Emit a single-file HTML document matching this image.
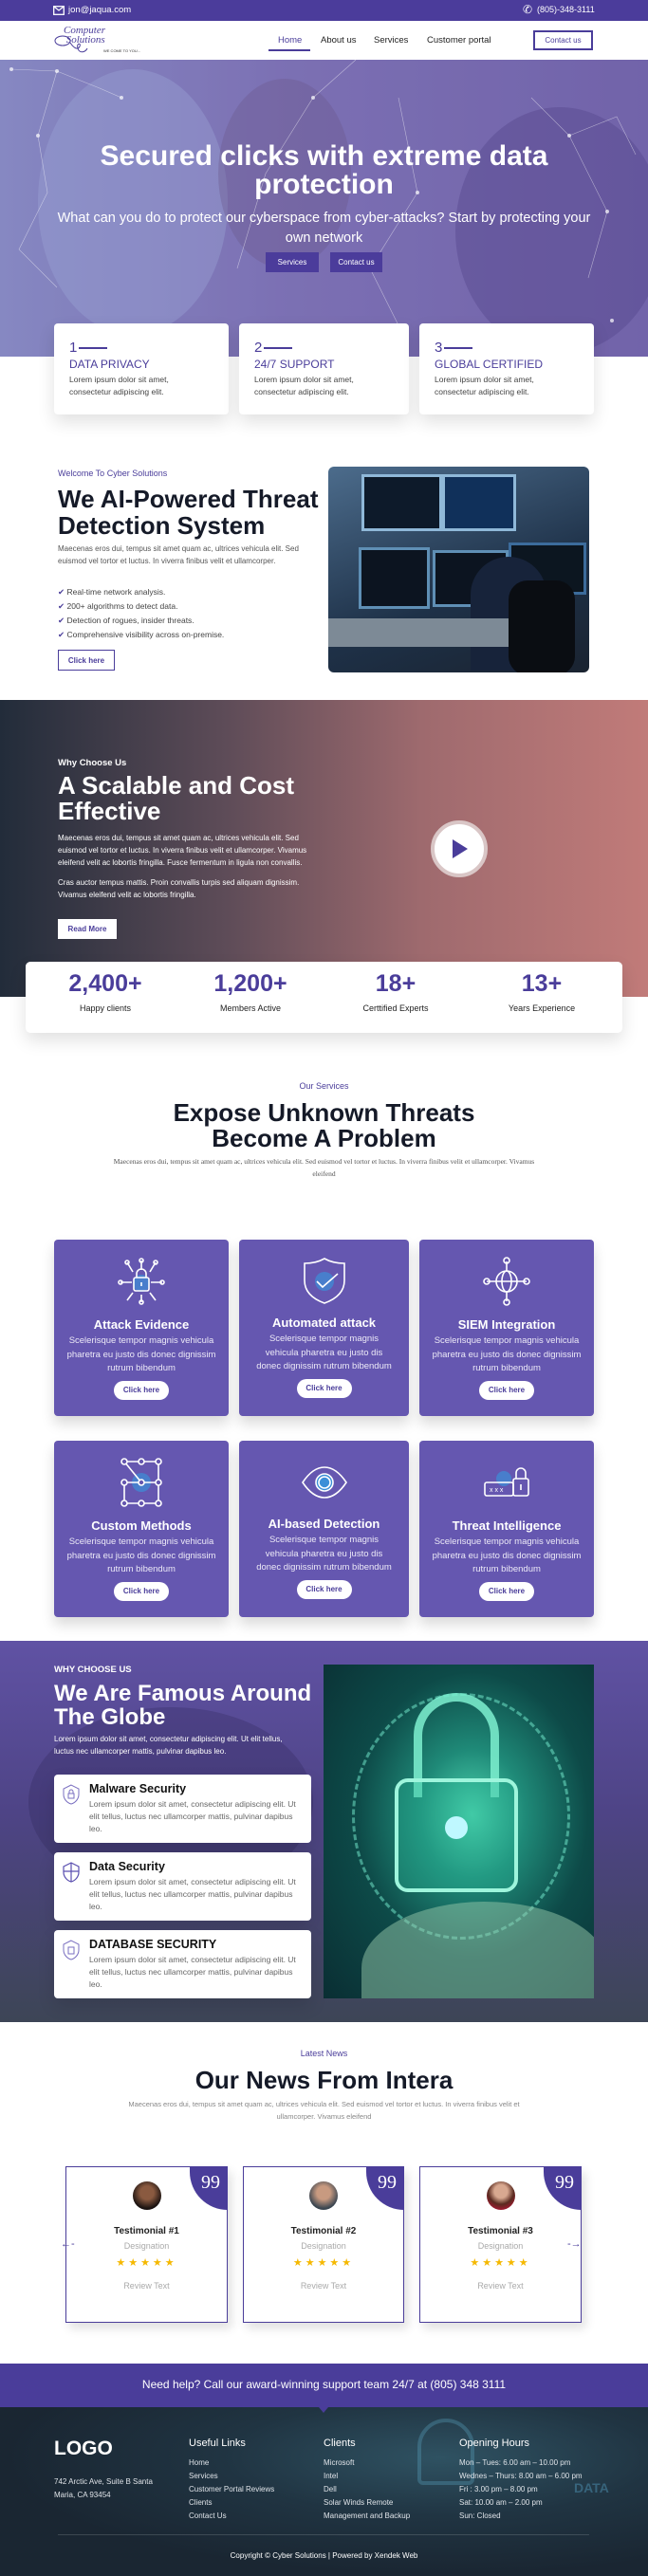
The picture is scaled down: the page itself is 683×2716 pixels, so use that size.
<!DOCTYPE html>
<html><head><meta charset="utf-8"><style>
*{margin:0;padding:0;box-sizing:border-box}
body{width:683px;height:2716px;position:relative;font-family:"Liberation Sans",sans-serif;background:#fff;overflow:hidden;color:#222}
.a{position:absolute}
.c{text-align:center}
.w{color:#fff}
.p{color:#4a3d9a}
.btnw{background:#fff;border:2px solid #4a3d9a;color:#4a3d9a;font-size:8px;font-weight:bold;display:flex;align-items:center;justify-content:center}
.card{background:#fff;border-radius:4px;box-shadow:0 8px 18px rgba(0,0,0,.12)}
.sv{background:#6557b0;border-radius:4px;box-shadow:0 8px 14px rgba(0,0,0,.15);color:#fff;text-align:center}
.sv h4{position:absolute;left:0;right:0;top:82px;font-size:13px}
.sv p{position:absolute;left:10px;right:10px;top:100px;font-size:9.5px;line-height:14.5px;color:#ece9f7}
.sv .b{position:absolute;left:50%;margin-left:-29px;top:149px;width:58px;height:20px;background:#fff;color:#4a3d9a;border-radius:10px;font-size:8px;font-weight:bold;line-height:20px}
.sv svg{position:absolute;left:50%;margin-left:-25px;top:18px}
.tc{border:1.5px solid #4a3d9a;background:#fff;box-shadow:4px 6px 10px rgba(0,0,0,.12);overflow:hidden}
.tc .q{position:absolute;right:-1px;top:-1px;width:40px;height:46px;background:#4a3d9a;border-bottom-left-radius:40px;color:#fff;font-size:20px;text-align:right;padding:6px 8px 0 0;font-family:"Liberation Serif",serif}
.tc .n{position:absolute;left:0;right:0;top:62px;font-size:10px;font-weight:bold;text-align:center}
.tc .d{position:absolute;left:0;right:0;top:78px;font-size:9px;color:#aaa;text-align:center}
.tc .s{position:absolute;left:0;right:0;top:94px;font-size:11px;color:#f5b800;text-align:center;letter-spacing:3px}
.tc .r{position:absolute;left:0;right:0;top:120px;font-size:9px;color:#aaa;text-align:center}
.tc .av{position:absolute;left:50%;margin-left:-15px;top:15px;width:30px;height:30px;border-radius:50%}
.ft{font-size:9px;color:#dfe3e8;line-height:14px}
.fh{font-size:11px;color:#fff}
.wc h5{position:absolute;left:37px;top:8px;font-size:12.5px;color:#111}
.wc p{position:absolute;left:37px;top:25px;right:10px;font-size:8.5px;line-height:13px;color:#666}
.wc svg{position:absolute;left:9px;top:10px}
</style></head><body>

<div class="a" style="left:0;top:0;width:683px;height:22px;background:#4b3c9b"></div>
<svg class="a" style="left:56px;top:6px" width="12" height="10" viewBox="0 0 12 10"><rect x=".7" y=".7" width="10.6" height="8.6" fill="none" stroke="#fff" stroke-width="1.3"/><path d="M1 1l5 4 5-4" fill="none" stroke="#fff" stroke-width="1.2"/></svg>
<div class="a w" style="left:72px;top:5px;font-size:9.5px">jon@jaqua.com</div>
<div class="a w" style="left:551px;top:3px;font-size:12px">&#9990;</div>
<div class="a w" style="left:566px;top:5px;font-size:9px">(805)-348-3111</div>

<div class="a" style="left:0;top:22px;width:683px;height:41px;background:#fff;box-shadow:0 1px 2px rgba(0,0,0,.1)"></div>
<div class="a" style="left:67px;top:27px;font-family:'Liberation Serif',serif;font-size:11px;color:#4a3d9a;line-height:10px;font-style:italic">Computer<br>&nbsp;Solutions</div>
<svg class="a" style="left:56px;top:33px" width="40" height="26" viewBox="0 0 40 26"><ellipse cx="10" cy="10" rx="8" ry="5" fill="none" stroke="#4a3d9a" stroke-width="1"/><path d="M18 12c4 6 8 8 10 4s-4-4-2 2 8 4 10 0" fill="none" stroke="#4a3d9a" stroke-width="1"/></svg>
<div class="a" style="left:109px;top:51px;font-size:4px;color:#333">WE COME TO YOU...</div>
<div class="a p" style="left:293px;top:37px;font-size:9.5px">Home</div>
<div class="a" style="left:283px;top:52px;width:44px;height:2px;background:#4a3d9a"></div>
<div class="a" style="left:338px;top:37px;font-size:9.5px;color:#222">About us</div>
<div class="a" style="left:394px;top:37px;font-size:9.5px;color:#222">Services</div>
<div class="a" style="left:450px;top:37px;font-size:9.5px;color:#222">Customer portal</div>
<div class="a btnw" style="left:562px;top:32px;width:63px;height:21px;font-weight:normal">Contact us</div>

<div class="a" style="left:0;top:63px;width:683px;height:313px;background:linear-gradient(90deg,#9096c8 0%,#8378b6 45%,#7668aa 100%);overflow:hidden">
 <div class="a" style="left:40px;top:10px;width:200px;height:280px;border-radius:50%;background:rgba(170,185,225,.4)"></div>
 <div class="a" style="left:230px;top:20px;width:140px;height:200px;border-radius:50%;background:rgba(110,90,130,.35)"></div>
 <div class="a" style="left:480px;top:50px;width:220px;height:260px;border-radius:50%;background:rgba(80,65,130,.4)"></div>
 <div class="a" style="left:0;top:0;width:683px;height:313px;background:rgba(95,80,170,.2)"></div>
 <svg class="a" style="left:0;top:0" width="683" height="313"><g stroke="rgba(255,255,255,.5)" stroke-width=".6" fill="none"><path d="M12 10L60 12 105 30 128 40M60 12L40 80 50 140 20 200 60 240M375 0L330 40 280 120 250 220M420 40L440 140 390 220 430 300M560 40L600 80 640 160 620 230M600 80L650 60 670 100"/></g><g fill="rgba(255,255,255,.7)"><circle cx="12" cy="10" r="2"/><circle cx="60" cy="12" r="2"/><circle cx="128" cy="40" r="2"/><circle cx="40" cy="80" r="2"/><circle cx="330" cy="40" r="2"/><circle cx="440" cy="140" r="2"/><circle cx="600" cy="80" r="2"/><circle cx="640" cy="160" r="2"/><circle cx="645" cy="275" r="2"/></g></svg>
</div>
<div class="a w c" style="left:0;top:150px;width:683px;font-size:30px;font-weight:bold;line-height:30px">Secured clicks with extreme data<br>protection</div>
<div class="a w c" style="left:60px;top:220px;width:563px;font-size:14.5px;line-height:21px">What can you do to protect our cyberspace from cyber-attacks? Start by protecting your own network</div>
<div class="a w c" style="left:280px;top:266px;width:56px;height:21px;background:#4b3c9b;font-size:8px;line-height:21px">Services</div>
<div class="a w c" style="left:348px;top:266px;width:55px;height:21px;background:#4b3c9b;font-size:8px;line-height:21px">Contact us</div>

<div class="a card" style="left:57px;top:341px;width:184px;height:96px"></div>
<div class="a card" style="left:252px;top:341px;width:179px;height:96px"></div>
<div class="a card" style="left:442px;top:341px;width:184px;height:96px"></div>
<div class="a p" style="left:73px;top:358px;font-size:15px">1<span style="display:inline-block;width:30px;height:1.5px;background:#4a3d9a;vertical-align:middle;margin-left:2px"></span></div>
<div class="a p" style="left:268px;top:358px;font-size:15px">2<span style="display:inline-block;width:30px;height:1.5px;background:#4a3d9a;vertical-align:middle;margin-left:2px"></span></div>
<div class="a p" style="left:458px;top:358px;font-size:15px">3<span style="display:inline-block;width:30px;height:1.5px;background:#4a3d9a;vertical-align:middle;margin-left:2px"></span></div>
<div class="a p" style="left:73px;top:377px;font-size:12px">DATA PRIVACY</div>
<div class="a p" style="left:268px;top:377px;font-size:12px">24/7 SUPPORT</div>
<div class="a p" style="left:458px;top:377px;font-size:12px">GLOBAL CERTIFIED</div>
<div class="a" style="left:73px;top:394px;font-size:8.5px;line-height:13px;color:#444">Lorem ipsum dolor sit amet,<br>consectetur adipiscing elit.</div>
<div class="a" style="left:268px;top:394px;font-size:8.5px;line-height:13px;color:#444">Lorem ipsum dolor sit amet,<br>consectetur adipiscing elit.</div>
<div class="a" style="left:458px;top:394px;font-size:8.5px;line-height:13px;color:#444">Lorem ipsum dolor sit amet,<br>consectetur adipiscing elit.</div>

<div class="a p" style="left:61px;top:494px;font-size:9px">Welcome To Cyber Solutions</div>
<div class="a" style="left:61px;top:512px;font-size:26px;font-weight:bold;line-height:28px;color:#151a28">We AI-Powered Threat<br>Detection System</div>
<div class="a" style="left:61px;top:572px;font-size:8px;line-height:13px;color:#555;width:270px">Maecenas eros dui, tempus sit amet quam ac, ultrices vehicula elit. Sed euismod vel tortor et luctus. In viverra finibus velit et ullamcorper.</div>
<div class="a" style="left:61px;top:617px;font-size:8.5px;line-height:15px;color:#444"><span class="p">&#10004;</span> Real-time network analysis.<br><span class="p">&#10004;</span> 200+ algorithms to detect data.<br><span class="p">&#10004;</span> Detection of rogues, insider threats.<br><span class="p">&#10004;</span> Comprehensive visibility across on-premise.</div>
<div class="a btnw" style="left:61px;top:685px;width:60px;height:22px;border-width:1.5px">Click here</div>
<div class="a" style="left:346px;top:492px;width:275px;height:217px;border-radius:6px;overflow:hidden;background:linear-gradient(160deg,#4c6c8c,#1e3148 60%,#1a2330)">
 <div class="a" style="left:35px;top:8px;width:85px;height:60px;background:#0d1a2a;border:3px solid #8fb8d8"></div>
 <div class="a" style="left:120px;top:8px;width:78px;height:60px;background:#10305a;border:3px solid #8fb8d8"></div>
 <div class="a" style="left:32px;top:85px;width:75px;height:65px;background:#0c1420;border:3px solid #5f8fb5"></div>
 <div class="a" style="left:110px;top:88px;width:80px;height:60px;background:#0c1420;border:3px solid #5f8fb5"></div>
 <div class="a" style="left:190px;top:80px;width:82px;height:55px;background:#0c1620;border:3px solid #3c6c9c"></div>
 <div class="a" style="left:150px;top:95px;width:80px;height:120px;border-radius:40px 40px 0 0;background:#17233a"></div>
 <div class="a" style="left:190px;top:120px;width:70px;height:100px;border-radius:20px;background:#0a0d12"></div>
 <div class="a" style="left:0;top:160px;width:190px;height:30px;background:#7d8a96"></div>
</div>

<div class="a" style="left:0;top:738px;width:683px;height:313px;background:linear-gradient(90deg,#222c3a 0%,#5e4c58 35%,#9e6a6e 65%,#c17b79 100%)"></div>
<div class="a w" style="left:61px;top:799px;font-size:9.5px;font-weight:bold">Why Choose Us</div>
<div class="a w" style="left:61px;top:815px;font-size:26px;font-weight:bold;line-height:27px">A Scalable and Cost<br>Effective</div>
<div class="a w" style="left:61px;top:877px;width:280px;font-size:8px;line-height:13px">Maecenas eros dui, tempus sit amet quam ac, ultrices vehicula elit. Sed euismod vel tortor et luctus. In viverra finibus velit et ullamcorper. Vivamus eleifend velit ac lobortis fringilla. Fusce fermentum in ligula non convallis.</div>
<div class="a w" style="left:61px;top:924px;width:280px;font-size:8px;line-height:13px">Cras auctor tempus mattis. Proin convallis turpis sed aliquam dignissim. Vivamus eleifend velit ac lobortis fringilla.</div>
<div class="a btnw" style="left:61px;top:969px;width:62px;height:21px;border-color:#fff;border-width:1.5px">Read More</div>
<div class="a" style="left:454px;top:865px;width:60px;height:60px;border-radius:50%;background:#fff;border:4px solid #d9c6c6"></div>
<svg class="a" style="left:476px;top:884px" width="18" height="22" viewBox="0 0 18 22"><path d="M1 1L17 11 1 21Z" fill="#4a3d9a"/></svg>

<div class="a card" style="left:27px;top:1014px;width:629px;height:75px;border-radius:5px"></div>
<div class="a p c" style="left:27px;top:1023px;width:168px;font-size:25px;font-weight:bold">2,400+</div>
<div class="a p c" style="left:180px;top:1023px;width:168px;font-size:25px;font-weight:bold">1,200+</div>
<div class="a p c" style="left:333px;top:1023px;width:168px;font-size:25px;font-weight:bold">18+</div>
<div class="a p c" style="left:487px;top:1023px;width:168px;font-size:25px;font-weight:bold">13+</div>
<div class="a c" style="left:27px;top:1058px;width:168px;font-size:9px;color:#222">Happy clients</div>
<div class="a c" style="left:180px;top:1058px;width:168px;font-size:9px;color:#222">Members Active</div>
<div class="a c" style="left:333px;top:1058px;width:168px;font-size:9px;color:#222">Certtified Experts</div>
<div class="a c" style="left:487px;top:1058px;width:168px;font-size:9px;color:#222">Years Experience</div>

<div class="a p c" style="left:0;top:1140px;width:683px;font-size:9px">Our Services</div>
<div class="a c" style="left:0;top:1160px;width:683px;font-size:26px;font-weight:bold;line-height:27px;color:#151a28">Expose Unknown Threats<br>Become A Problem</div>
<div class="a c" style="left:115px;top:1218px;width:453px;font-size:7.5px;line-height:13px;color:#555;font-family:'Liberation Serif',serif">Maecenas eros dui, tempus sit amet quam ac, ultrices vehicula elit. Sed euismod vel tortor et luctus. In viverra finibus velit et ullamcorper. Vivamus eleifend</div>

<div class="a sv" style="left:57px;top:1307px;width:184px;height:186px">
<svg width="50" height="52" viewBox="0 0 50 52" fill="none" stroke="#fff" stroke-width="1.6"><circle cx="25" cy="28" r="9" fill="#3c8fd8" stroke="none" opacity=".7"/><rect x="17" y="22" width="16" height="14" rx="2"/><path d="M20 22v-4a5 5 0 0110 0v4M25 27v4M3 27h12M35 27h12M25 4v10M25 40v8M10 6l6 10M40 6l-6 10M10 46l6-8M40 46l-6-8"/><circle cx="3" cy="27" r="2"/><circle cx="47" cy="27" r="2"/><circle cx="25" cy="4" r="2"/><circle cx="10" cy="6" r="2"/><circle cx="40" cy="6" r="2"/><circle cx="25" cy="48" r="2"/></svg>
<h4>Attack Evidence</h4><p>Scelerisque tempor magnis vehicula pharetra eu justo dis donec dignissim rutrum bibendum</p><div class="b">Click here</div></div>
<div class="a sv" style="left:252px;top:1307px;width:179px;height:186px">
<svg width="50" height="52" viewBox="0 0 50 52" fill="none" stroke="#fff" stroke-width="1.6"><circle cx="25" cy="26" r="10" fill="#3c8fd8" stroke="none" opacity=".7"/><path d="M25 2C18 6 11 7 4 7v18c0 13 10 20 21 24 11-4 21-11 21-24V7c-7 0-14-1-21-5z"/><path d="M17 26l6 6 16-14"/></svg>
<h4 style="top:80px">Automated attack</h4><p style="top:98px;left:16px;right:16px">Scelerisque tempor magnis vehicula pharetra eu justo dis donec dignissim rutrum bibendum</p><div class="b" style="top:147px">Click here</div></div>
<div class="a sv" style="left:442px;top:1307px;width:184px;height:186px">
<svg width="50" height="52" viewBox="0 0 50 52" fill="none" stroke="#fff" stroke-width="1.6"><circle cx="25" cy="26" r="11"/><ellipse cx="25" cy="26" rx="5" ry="11"/><path d="M14 26h22M25 5v10M25 37v10M4 26h10M36 26h10"/><circle cx="25" cy="4" r="3"/><circle cx="25" cy="48" r="3"/><circle cx="4" cy="26" r="3"/><circle cx="46" cy="26" r="3"/></svg>
<h4>SIEM Integration</h4><p>Scelerisque tempor magnis vehicula pharetra eu justo dis donec dignissim rutrum bibendum</p><div class="b">Click here</div></div>

<div class="a sv" style="left:57px;top:1519px;width:184px;height:186px">
<svg width="50" height="52" viewBox="0 0 50 52" fill="none" stroke="#fff" stroke-width="1.6"><circle cx="25" cy="26" r="10" fill="#3c8fd8" stroke="none" opacity=".7"/><path d="M7 4h36v44M7 4l18 22M7 26v22h36M7 26h36M25 4v0"/><g fill="#6557b0"><circle cx="7" cy="4" r="3"/><circle cx="25" cy="4" r="3"/><circle cx="43" cy="4" r="3"/><circle cx="7" cy="26" r="3"/><circle cx="25" cy="26" r="3"/><circle cx="43" cy="26" r="3"/><circle cx="7" cy="48" r="3"/><circle cx="25" cy="48" r="3"/><circle cx="43" cy="48" r="3"/></g></svg>
<h4>Custom Methods</h4><p>Scelerisque tempor magnis vehicula pharetra eu justo dis donec dignissim rutrum bibendum</p><div class="b">Click here</div></div>
<div class="a sv" style="left:252px;top:1519px;width:179px;height:186px">
<svg width="50" height="52" viewBox="0 0 50 52" fill="none" stroke="#fff" stroke-width="1.6"><path d="M2 26C10 14 18 10 25 10s15 4 23 16c-8 12-16 16-23 16S10 38 2 26z"/><circle cx="25" cy="26" r="9" fill="#3c8fd8"/><circle cx="25" cy="26" r="6"/></svg>
<h4 style="top:80px">AI-based Detection</h4><p style="top:98px;left:16px;right:16px">Scelerisque tempor magnis vehicula pharetra eu justo dis donec dignissim rutrum bibendum</p><div class="b" style="top:147px">Click here</div></div>
<div class="a sv" style="left:442px;top:1519px;width:184px;height:186px">
<svg width="50" height="52" viewBox="0 0 50 52" fill="none" stroke="#fff" stroke-width="1.6"><circle cx="22" cy="22" r="8" fill="#3c8fd8" stroke="none" opacity=".7"/><rect x="2" y="26" width="30" height="14" rx="2"/><rect x="32" y="22" width="16" height="18" rx="2"/><path d="M35 22v-6a5 5 0 0110 0v6M40 28v6"/><text x="7" y="36" font-size="7" fill="#fff" stroke="none" font-family="Liberation Sans">x x x</text></svg>
<h4>Threat Intelligence</h4><p>Scelerisque tempor magnis vehicula pharetra eu justo dis donec dignissim rutrum bibendum</p><div class="b">Click here</div></div>

<div class="a" style="left:0;top:1730px;width:683px;height:402px;background:linear-gradient(180deg,#6052a4 0%,#4e4486 45%,#3d4556 100%)"></div>
<div class="a" style="left:30px;top:1800px;width:300px;height:200px;border-radius:50%;background:rgba(40,30,80,.25)"></div>
<div class="a w" style="left:57px;top:1755px;font-size:9.5px;font-weight:bold">WHY CHOOSE US</div>
<div class="a w" style="left:57px;top:1773px;font-size:24px;font-weight:bold;line-height:25px">We Are Famous Around<br>The Globe</div>
<div class="a w" style="left:57px;top:1827px;width:260px;font-size:8px;line-height:13px">Lorem ipsum dolor sit amet, consectetur adipiscing elit. Ut elit tellus, luctus nec ullamcorper mattis, pulvinar dapibus leo.</div>
<div class="a card wc" style="left:57px;top:1871px;width:271px;height:72px"><svg width="18" height="22" viewBox="0 0 18 22" fill="none" stroke="#7a6fc0" stroke-width="1"><path d="M9 1L1 5v6c0 5 4 9 8 10 4-1 8-5 8-10V5z"/><rect x="6" y="10" width="6" height="5"/><path d="M7 10V8a2 2 0 014 0v2"/></svg><h5>Malware Security</h5><p>Lorem ipsum dolor sit amet, consectetur adipiscing elit. Ut elit tellus, luctus nec ullamcorper mattis, pulvinar dapibus leo.</p></div>
<div class="a card wc" style="left:57px;top:1953px;width:271px;height:72px"><svg width="18" height="22" viewBox="0 0 18 22" fill="none" stroke="#5a4fb0" stroke-width="1.2"><path d="M9 1L1 5v6c0 5 4 9 8 10 4-1 8-5 8-10V5z"/><path d="M9 1v20M1 10h16"/></svg><h5>Data Security</h5><p>Lorem ipsum dolor sit amet, consectetur adipiscing elit. Ut elit tellus, luctus nec ullamcorper mattis, pulvinar dapibus leo.</p></div>
<div class="a card wc" style="left:57px;top:2035px;width:271px;height:72px"><svg width="18" height="22" viewBox="0 0 18 22" fill="none" stroke="#7a6fc0" stroke-width="1"><path d="M9 1L1 5v6c0 5 4 9 8 10 4-1 8-5 8-10V5z"/><rect x="6" y="8" width="6" height="7"/></svg><h5>DATABASE SECURITY</h5><p>Lorem ipsum dolor sit amet, consectetur adipiscing elit. Ut elit tellus, luctus nec ullamcorper mattis, pulvinar dapibus leo.</p></div>
<div class="a" style="left:341px;top:1755px;width:285px;height:352px;overflow:hidden;background:radial-gradient(ellipse at 55% 45%,#4fd6b0 0%,#1f8a78 25%,#0d4a48 55%,#0a2e33 100%)">
 <div class="a" style="left:95px;top:30px;width:90px;height:110px;border:9px solid #7ef0d0;border-bottom:none;border-radius:45px 45px 0 0;opacity:.85"></div>
 <div class="a" style="left:75px;top:120px;width:130px;height:120px;border:4px solid #9ef5dc;border-radius:14px;background:rgba(40,180,150,.35)"></div>
 <div class="a" style="left:128px;top:160px;width:24px;height:24px;border-radius:50%;background:#bff8ff"></div>
 <div class="a" style="left:30px;top:30px;width:230px;height:260px;border:3px dashed rgba(120,240,210,.5);border-radius:50%"></div>
 <div class="a" style="left:40px;top:250px;width:260px;height:140px;border-radius:50% 50% 0 0;background:rgba(150,200,170,.5)"></div>
</div>

<div class="a p c" style="left:0;top:2160px;width:683px;font-size:9px">Latest News</div>
<div class="a c" style="left:0;top:2178px;width:683px;font-size:26px;font-weight:bold;color:#151a28">Our News From Intera</div>
<div class="a c" style="left:120px;top:2212px;width:443px;font-size:7.5px;line-height:13px;color:#888">Maecenas eros dui, tempus sit amet quam ac, ultrices vehicula elit. Sed euismod vel tortor et luctus. In viverra finibus velit et ullamcorper. Vivamus eleifend</div>
<div class="a tc" style="left:69px;top:2284px;width:171px;height:165px"><div class="q">99</div><div class="av" style="background:radial-gradient(circle at 50% 40%,#8a5a40 30%,#1a1210 70%)"></div><div class="n">Testimonial #1</div><div class="d">Designation</div><div class="s">★★★★★</div><div class="r">Review Text</div></div>
<div class="a tc" style="left:256px;top:2284px;width:170px;height:165px"><div class="q">99</div><div class="av" style="background:radial-gradient(circle at 50% 40%,#c89a80 30%,#3a4550 70%)"></div><div class="n">Testimonial #2</div><div class="d">Designation</div><div class="s">★★★★★</div><div class="r">Review Text</div></div>
<div class="a tc" style="left:442px;top:2284px;width:171px;height:165px"><div class="q">99</div><div class="av" style="background:radial-gradient(circle at 50% 35%,#d8a890 28%,#5a2a20 55%,#a01830 80%)"></div><div class="n">Testimonial #3</div><div class="d">Designation</div><div class="s">★★★★★</div><div class="r">Review Text</div></div>
<div class="a p" style="left:64px;top:2360px;font-size:11px">&#8592;-</div>
<div class="a p" style="left:598px;top:2360px;font-size:11px">-&#8594;</div>

<div class="a" style="left:0;top:2492px;width:683px;height:46px;background:#4a3d9a"></div>
<div class="a w c" style="left:0;top:2507px;width:683px;font-size:12px">Need help? Call our award-winning support team 24/7 at (805) 348 3111</div>

<div class="a" style="left:0;top:2538px;width:683px;height:178px;background:radial-gradient(ellipse at 68% 30%,#2f5262 0%,#203442 35%,#1a2632 70%)"></div>
<div class="a" style="left:336px;top:2538px;border-left:5px solid transparent;border-right:5px solid transparent;border-top:6px solid #4a3d9a"></div>
<div class="a" style="left:440px;top:2550px;width:60px;height:70px;border:4px solid rgba(90,160,190,.35);border-radius:30px 30px 6px 6px"></div>
<div class="a w" style="left:57px;top:2570px;font-size:21px;font-weight:bold">LOGO</div>
<div class="a ft" style="left:57px;top:2610px;font-size:8px">742 Arctic Ave, Suite B Santa<br>Maria, CA 93454</div>
<div class="a fh" style="left:199px;top:2570px">Useful Links</div>
<div class="a ft" style="left:199px;top:2590px;line-height:14px;font-size:8px">Home<br>Services<br>Customer Portal Reviews<br>Clients<br>Contact Us</div>
<div class="a fh" style="left:341px;top:2570px">Clients</div>
<div class="a ft" style="left:341px;top:2590px;line-height:14px;font-size:8px">Microsoft<br>Intel<br>Dell<br>Solar Winds Remote<br>Management and Backup</div>
<div class="a fh" style="left:484px;top:2570px">Opening Hours</div>
<div class="a ft" style="left:484px;top:2590px;line-height:14px;font-size:8px">Mon – Tues: 6.00 am – 10.00 pm<br>Wednes – Thurs: 8.00 am – 6.00 pm<br>Fri : 3.00 pm – 8.00 pm<br>Sat: 10.00 am – 2.00 pm<br>Sun: Closed</div>
<div class="a" style="left:605px;top:2615px;font-size:14px;font-weight:bold;color:rgba(70,130,160,.6)">DATA</div>
<div class="a" style="left:61px;top:2672px;width:560px;height:1px;background:rgba(255,255,255,.15)"></div>
<div class="a w c" style="left:0;top:2690px;width:683px;font-size:8px">Copyright © Cyber Solutions | Powered by Xendek Web</div>
</body></html>
